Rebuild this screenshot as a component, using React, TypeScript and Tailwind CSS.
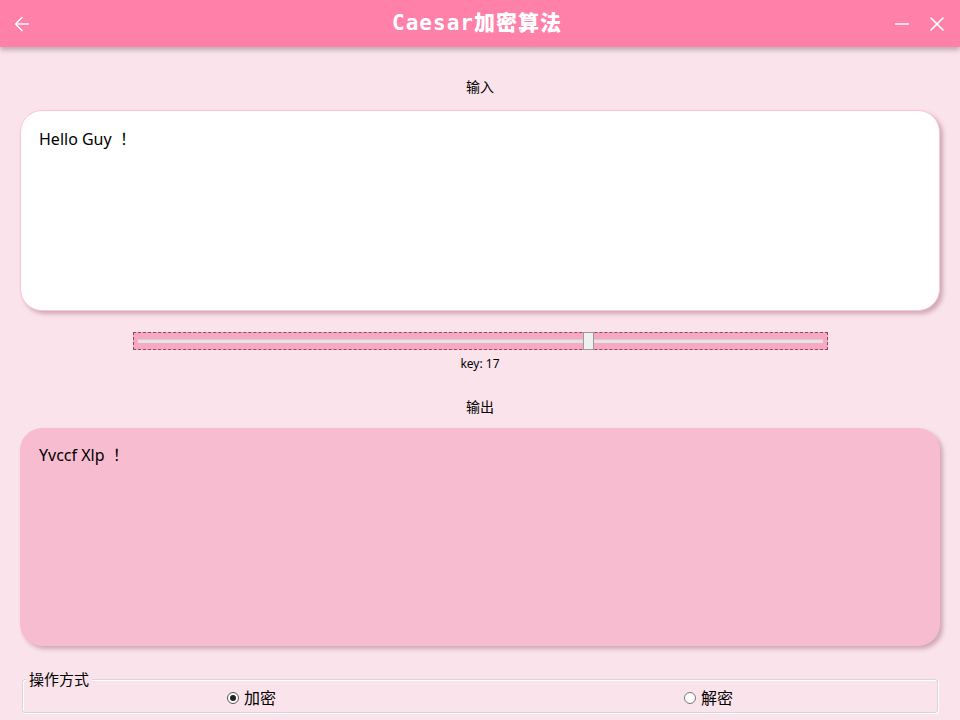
import { ArrowLeft, Minus, X } from "lucide-react";

const font = { fontFamily: '"Noto Sans", "Noto Sans CJK SC", sans-serif' };

const App = () => {
  return (
    <div className="w-[960px] h-[720px] bg-[#fbe3eb] flex flex-col overflow-hidden" style={font}>
      {/* Title bar */}
      <div className="h-[47px] bg-[#ff80a8] flex items-center justify-between px-[11px] shadow-[0_3px_5px_rgba(0,0,0,0.25)] relative z-10">
        <ArrowLeft className="w-[22px] h-[22px] text-white" strokeWidth={1.6} />
        <h1
          className="text-white text-[21px] font-extrabold tracking-[1px] ml-[30px]"
          style={{ fontFamily: '"DejaVu Sans Mono", "Noto Sans CJK SC", monospace' }}
        >
          Caesar加密算法
        </h1>
        <div className="flex items-center gap-[12px]">
          <Minus className="w-[22px] h-[22px] text-white" strokeWidth={1.6} />
          <X className="w-[24px] h-[24px] text-white" strokeWidth={1.6} />
        </div>
      </div>

      <div className="flex flex-col px-[20px]">
        {/* Input */}
        <div className="text-center text-[14px] text-black mt-[30px] leading-[20px]">输入</div>
        <div className="mt-[13px] h-[201px] bg-white rounded-[22px] border border-[#ffc4d8] shadow-[3px_3px_4px_rgba(150,100,115,0.45)] px-[18px] pt-[17px] text-[16px] text-black leading-[22px] whitespace-pre">
          {"Hello Guy  ！"}
        </div>

        {/* Slider */}
        <div className="mt-[21px] mx-auto w-[695px] h-[18px] bg-[#f8a8c3] border border-dashed border-[#8a4a62] flex items-center px-[4px] relative">
          <div className="w-full h-[4px] bg-[#e4e4e4] border-t border-[#d0d0d0]"></div>
          <div className="absolute left-[449px] top-[-1px] w-[11px] h-[18px] bg-[#f0f0f0] border border-[#9a9a9a]"></div>
        </div>
        <div className="text-center text-[12px] text-black mt-[6px] leading-[16px]">key: 17</div>

        {/* Output */}
        <div className="text-center text-[14px] text-black mt-[25px] leading-[20px]">输出</div>
        <div className="mt-[11px] h-[218px] bg-[#f8bcd0] rounded-[22px] shadow-[3px_3px_4px_rgba(150,100,115,0.45)] px-[19px] pt-[16px] text-[16px] text-black leading-[22px] whitespace-pre">
          {"Yvccf Xlp  ！"}
        </div>

        {/* Mode group */}
        <div className="mt-[33px] mx-[2px] h-[34px] border border-[#d6d6de] rounded-[3px] shadow-[inset_1px_1px_0_#ffffff,1px_1px_0_#ffffff] relative grid grid-cols-2">
          <span className="absolute left-[3px] top-[-10px] bg-[#fbe3eb] px-[3px] text-[15px] leading-[18px] text-black">
            操作方式
          </span>
          <label className="flex items-center justify-center gap-[5px] pt-[3px] text-[16px] text-black">
            <span className="w-[12px] h-[12px] rounded-full border border-[#555] bg-white flex items-center justify-center">
              <span className="w-[6px] h-[6px] rounded-full bg-[#222]"></span>
            </span>
            加密
          </label>
          <label className="flex items-center justify-center gap-[5px] pt-[3px] text-[16px] text-black">
            <span className="w-[12px] h-[12px] rounded-full border border-[#777] bg-white"></span>
            解密
          </label>
        </div>
      </div>
    </div>
  );
};

export default App;
